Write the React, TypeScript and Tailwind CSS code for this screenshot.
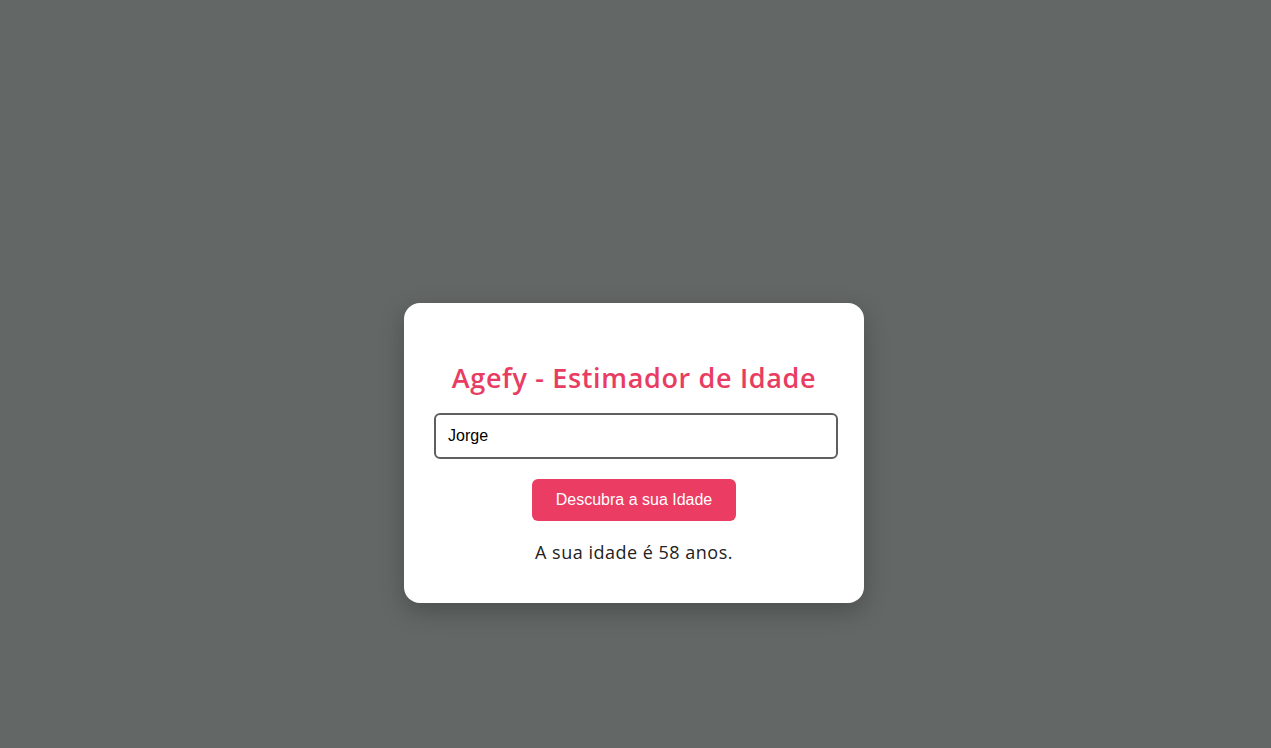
import React, { useState } from 'react';

const App = () => {
  const [name, setName] = useState('Jorge');

  return (
    <div className="flex min-h-screen w-full flex-col items-center bg-[#636867] pt-[303px] pr-[3px] pb-[145px]">
      {/* Card */}
      <div className="flex w-[460px] flex-col items-center rounded-2xl bg-white px-[30px] pt-[59px] pb-[40px] shadow-[0_8px_24px_rgba(0,0,0,0.25)]">
        <h1 className="text-[27px] leading-[31px] font-semibold tracking-[0.65px] text-[#e83d63] [font-family:'Open_Sans',sans-serif]">
          Agefy - Estimador de Idade
        </h1>
        <input
          type="text"
          value={name}
          onChange={(e) => setName(e.target.value)}
          className="mt-[20px] h-[46px] w-[404px] shrink-0 self-start rounded-md border-2 border-[#5f5f5f] px-[12px] text-base text-black outline-none [font-family:'Liberation_Sans',Arial,sans-serif]"
        />
        <button className="mt-[20px] h-[42px] w-[204px] rounded-md bg-[#eb3c63] text-base text-white [font-family:'Liberation_Sans',Arial,sans-serif]">
          Descubra a sua Idade
        </button>
        <p className="mt-[20px] text-[18px] leading-[22px] tracking-[0.5px] text-[#222] [font-family:'Open_Sans',sans-serif]">
          A sua idade é 58 anos.
        </p>
      </div>
    </div>
  );
};

export default App;
